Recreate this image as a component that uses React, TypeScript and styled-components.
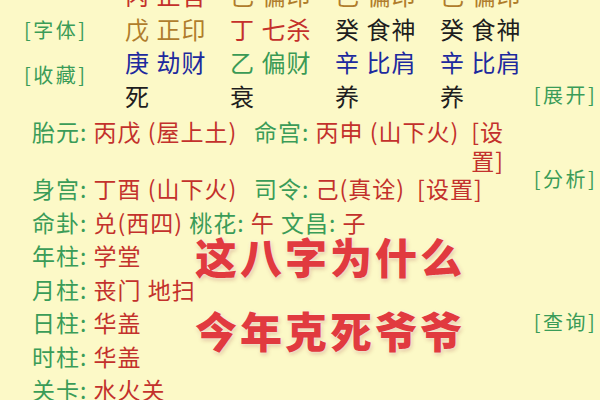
import React from "react";
import { styled, createGlobalStyle } from "styled-components";

const GlobalStyle = createGlobalStyle`
  html, body {
    margin: 0;
    padding: 0;
    background: #fcf9c7;
    overflow: hidden;
  }
  body {
    font-family: "Noto Sans CJK SC", "Noto Sans", sans-serif;
  }
`;

const COLORS: Record<string, string> = {
  fire: "#c4302b",
  earth: "#b07d2c",
  metal: "#1d2a9e",
  wood: "#3a9a55",
  water: "#1e1e1e",
};

type Cell = { stem: string; god?: string; tone: string };

// 四柱：天干 + 十神，按五行着色
const pillarRows: Cell[][] = [
  [
    { stem: "丙", god: "正官", tone: "fire" },
    { stem: "己", god: "偏印", tone: "earth" },
    { stem: "己", god: "偏印", tone: "earth" },
    { stem: "己", god: "偏印", tone: "earth" },
  ],
  [
    { stem: "戊", god: "正印", tone: "earth" },
    { stem: "丁", god: "七杀", tone: "fire" },
    { stem: "癸", god: "食神", tone: "water" },
    { stem: "癸", god: "食神", tone: "water" },
  ],
  [
    { stem: "庚", god: "劫财", tone: "metal" },
    { stem: "乙", god: "偏财", tone: "wood" },
    { stem: "辛", god: "比肩", tone: "metal" },
    { stem: "辛", god: "比肩", tone: "metal" },
  ],
  [
    { stem: "死", tone: "water" },
    { stem: "衰", tone: "water" },
    { stem: "养", tone: "water" },
    { stem: "养", tone: "water" },
  ],
];

const lowerRows: { label: string; value: string }[] = [
  { label: "年柱", value: "学堂" },
  { label: "月柱", value: "丧门 地扫" },
  { label: "日柱", value: "华盖" },
  { label: "时柱", value: "华盖" },
  { label: "关卡", value: "水火关" },
  { label: "空亡", value: "戌亥" },
];

const App = () => {
  return (
    <>
      <GlobalStyle />
      <S.Page>
        <S.Section>
          <S.Main>
            <S.LeftAside>
              <S.Link>[字体]</S.Link>
              <S.Link>[收藏]</S.Link>
            </S.LeftAside>
            <S.Pillars>
              {pillarRows.map((row, r) =>
                row.map((cell, c) => (
                  <S.PillarCell key={`${r}-${c}`} $color={COLORS[cell.tone]}>
                    {cell.stem}
                    {cell.god ? ` ${cell.god}` : ""}
                  </S.PillarCell>
                ))
              )}
            </S.Pillars>
          </S.Main>
          <S.RightAside $align="end" $pad="0 0 5px">
            <S.Link>[展开]</S.Link>
          </S.RightAside>
        </S.Section>

        <S.Section>
          <S.InfoList>
            <S.InfoLine>
              <S.Field $width={222}>
                <S.Label>胎元: </S.Label>
                <S.Value>丙戊 (屋上土)</S.Value>
              </S.Field>
              <S.Field>
                <S.Label>命宫: </S.Label>
                <S.Value>丙申 (山下火)</S.Value>
              </S.Field>
              <S.Setting>[设置]</S.Setting>
            </S.InfoLine>
            <S.InfoLine>
              <S.Field $width={222}>
                <S.Label>身宫: </S.Label>
                <S.Value>丁酉 (山下火)</S.Value>
              </S.Field>
              <S.Field>
                <S.Label>司令: </S.Label>
                <S.Value>己(真诠)</S.Value>
              </S.Field>
              <S.Setting>[设置]</S.Setting>
            </S.InfoLine>
          </S.InfoList>
          <S.RightAside $align="end" $pad="0 0 12px">
            <S.Link>[分析]</S.Link>
          </S.RightAside>
        </S.Section>

        <S.Section>
          <S.InfoList $gap={5}>
            <S.InfoLine>
              <S.Label>命卦: </S.Label>
              <S.Value>兑(西四) </S.Value>
              <S.Label>桃花: </S.Label>
              <S.Value>午 </S.Value>
              <S.Label>文昌: </S.Label>
              <S.Value>子</S.Value>
            </S.InfoLine>
            {lowerRows.map((row) => (
              <S.InfoLine key={row.label}>
                <S.Label>{row.label}: </S.Label>
                <S.Value>{row.value}</S.Value>
              </S.InfoLine>
            ))}
          </S.InfoList>
          <S.RightAside $align="center">
            <S.Link>[查询]</S.Link>
          </S.RightAside>
        </S.Section>

        <S.Headline>
          这八字为什么
          <br />
          今年克死爷爷
        </S.Headline>
      </S.Page>
    </>
  );
};

export default App;

const S = {
  Page: styled.div`
    position: relative;
    width: 600px;
    height: 400px;
    overflow: hidden;
    display: flex;
    flex-direction: column;
    gap: 5px;
  `,
  Section: styled.div`
    display: grid;
    grid-template-columns: 525px 75px;
    &:first-child {
      margin-top: -22px;
    }
  `,
  Main: styled.div`
    display: flex;
  `,
  LeftAside: styled.div`
    width: 125px;
    flex-shrink: 0;
    display: flex;
    flex-direction: column;
    gap: 21px;
    padding: 40px 0 0 24px;
    box-sizing: border-box;
  `,
  Link: styled.span`
    display: block;
    color: #3a9c58;
    font-size: 20px;
    letter-spacing: 2.5px;
    line-height: 24px;
    white-space: nowrap;
  `,
  Pillars: styled.div`
    display: grid;
    grid-template-columns: repeat(3, 105px) 90px;
    grid-auto-rows: 33.5px;
  `,
  PillarCell: styled.div<{ $color: string }>`
    color: ${(p) => p.$color};
    font-size: 24px;
    letter-spacing: 1px;
    line-height: 33.5px;
    white-space: nowrap;
  `,
  RightAside: styled.div<{ $align: string; $pad?: string }>`
    display: flex;
    flex-direction: column;
    align-items: center;
    justify-content: ${(p) =>
      p.$align === "end" ? "flex-end" : p.$align === "start" ? "flex-start" : "center"};
    padding: ${(p) => p.$pad ?? "0"};
    padding-left: 6px;
  `,
  InfoList: styled.div<{ $gap?: number }>`
    display: flex;
    flex-direction: column;
    gap: ${(p) => p.$gap ?? 0}px;
    padding-left: 32px;
    padding-right: 10px;
  `,
  InfoLine: styled.div`
    display: flex;
    align-items: flex-start;
    font-size: 23px;
    letter-spacing: 1px;
    line-height: 28.5px;
  `,
  Field: styled.span<{ $width?: number }>`
    display: flex;
    flex-shrink: 0;
    width: ${(p) => (p.$width ? `${p.$width}px` : "auto")};
  `,
  Label: styled.span`
    color: #3a9c58;
    white-space: pre;
    flex-shrink: 0;
  `,
  Value: styled.span`
    color: #c3312c;
    white-space: pre;
    flex-shrink: 0;
  `,
  Setting: styled.span`
    color: #c3312c;
    min-width: 0;
    padding-left: 12px;
  `,
  Headline: styled.div`
    position: absolute;
    left: 195px;
    top: 219px;
    color: #e13a3f;
    font-size: 42px;
    font-weight: 900;
    letter-spacing: 3px;
    line-height: 74px;
    white-space: nowrap;
    text-shadow: 0 0 3px rgba(255, 255, 255, 0.9), 1px 2px 4px rgba(140, 20, 20, 0.25);
  `,
};
